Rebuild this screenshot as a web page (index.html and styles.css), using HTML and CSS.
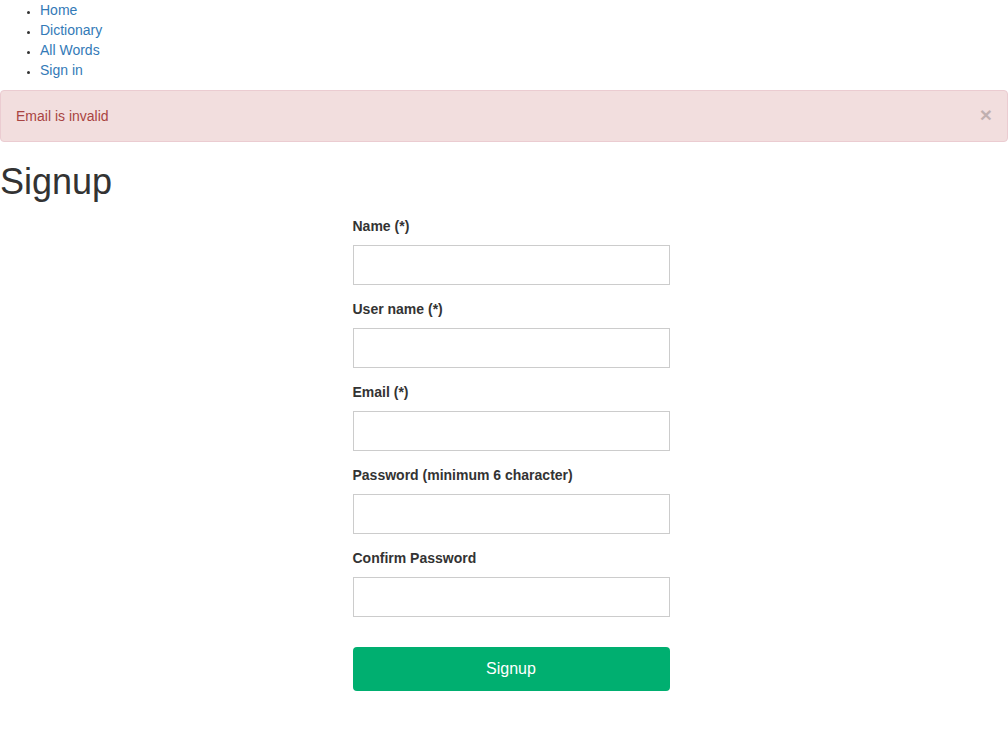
FILE: index.html
```html
<!DOCTYPE html>
<html>
<head>
<meta charset="utf-8">
<link rel="stylesheet" href="styles.css">
</head>
<body>
<ul class="nav">
  <li><a href="#">Home</a></li>
  <li><a href="#">Dictionary</a></li>
  <li><a href="#">All Words</a></li>
  <li><a href="#">Sign in</a></li>
</ul>
<div class="alert">
  <span>Email is invalid</span>
  <button class="close" type="button">&times;</button>
</div>
<h1 class="title">Signup</h1>
<form class="form">
  <div class="group">
    <label>Name (*)</label>
    <input class="field" type="text">
  </div>
  <div class="group">
    <label>User name (*)</label>
    <input class="field" type="text">
  </div>
  <div class="group">
    <label>Email (*)</label>
    <input class="field" type="text">
  </div>
  <div class="group">
    <label>Password (minimum 6 character)</label>
    <input class="field" type="password">
  </div>
  <div class="group">
    <label>Confirm Password</label>
    <input class="field" type="password">
  </div>
  <button class="submit" type="button">Signup</button>
</form>
</body>
</html>
```
FILE: styles.css
```css
* { box-sizing: border-box; }
html, body { margin: 0; padding: 0; }
body {
  font-family: "Liberation Sans", Arial, sans-serif;
  font-size: 14px;
  line-height: 20px;
  color: #333;
  background: #fff;
}
.nav {
  margin: 0 0 10px 0;
  padding: 0 0 0 40px;
}
.nav li { line-height: 20px; }
.nav li::marker { font-size: 11px; color: #333; }
.nav a { color: #337ab7; text-decoration: none; }
.alert {
  display: flex;
  align-items: center;
  justify-content: space-between;
  background: #f2dede;
  border: 1px solid #ebccd1;
  border-radius: 4px;
  color: #a94442;
  padding: 15px;
  height: 52px;
  margin-bottom: 20px;
}
.close {
  border: 0;
  background: none;
  padding: 0;
  font-family: "Liberation Sans", Arial, sans-serif;
  font-size: 21px;
  font-weight: bold;
  line-height: 1;
  color: #000;
  opacity: 0.2;
  margin-top: -3px;
}
.title {
  font-family: "Liberation Sans", Arial, sans-serif;
  font-size: 36px;
  font-weight: 500;
  line-height: 40px;
  margin: 0 0 14px 0;
  color: #333;
}
.form {
  width: 317px;
  margin: 0 auto;
  transform: translateX(7px);
}
.group { margin-bottom: 14px; }
.group label {
  display: block;
  font-weight: bold;
  line-height: 20px;
  margin-bottom: 9px;
}
.field {
  display: block;
  width: 100%;
  height: 40px;
  border: 1px solid #ccc;
  border-radius: 0;
  padding: 6px 12px;
  font-family: inherit;
  font-size: 14px;
  background: #fff;
}
.submit {
  display: block;
  width: 100%;
  height: 44px;
  margin-top: 30px;
  border: 0;
  border-radius: 4px;
  background: #00af70;
  color: #fff;
  font-family: "Liberation Sans", Arial, sans-serif;
  font-size: 16px;
}
```
